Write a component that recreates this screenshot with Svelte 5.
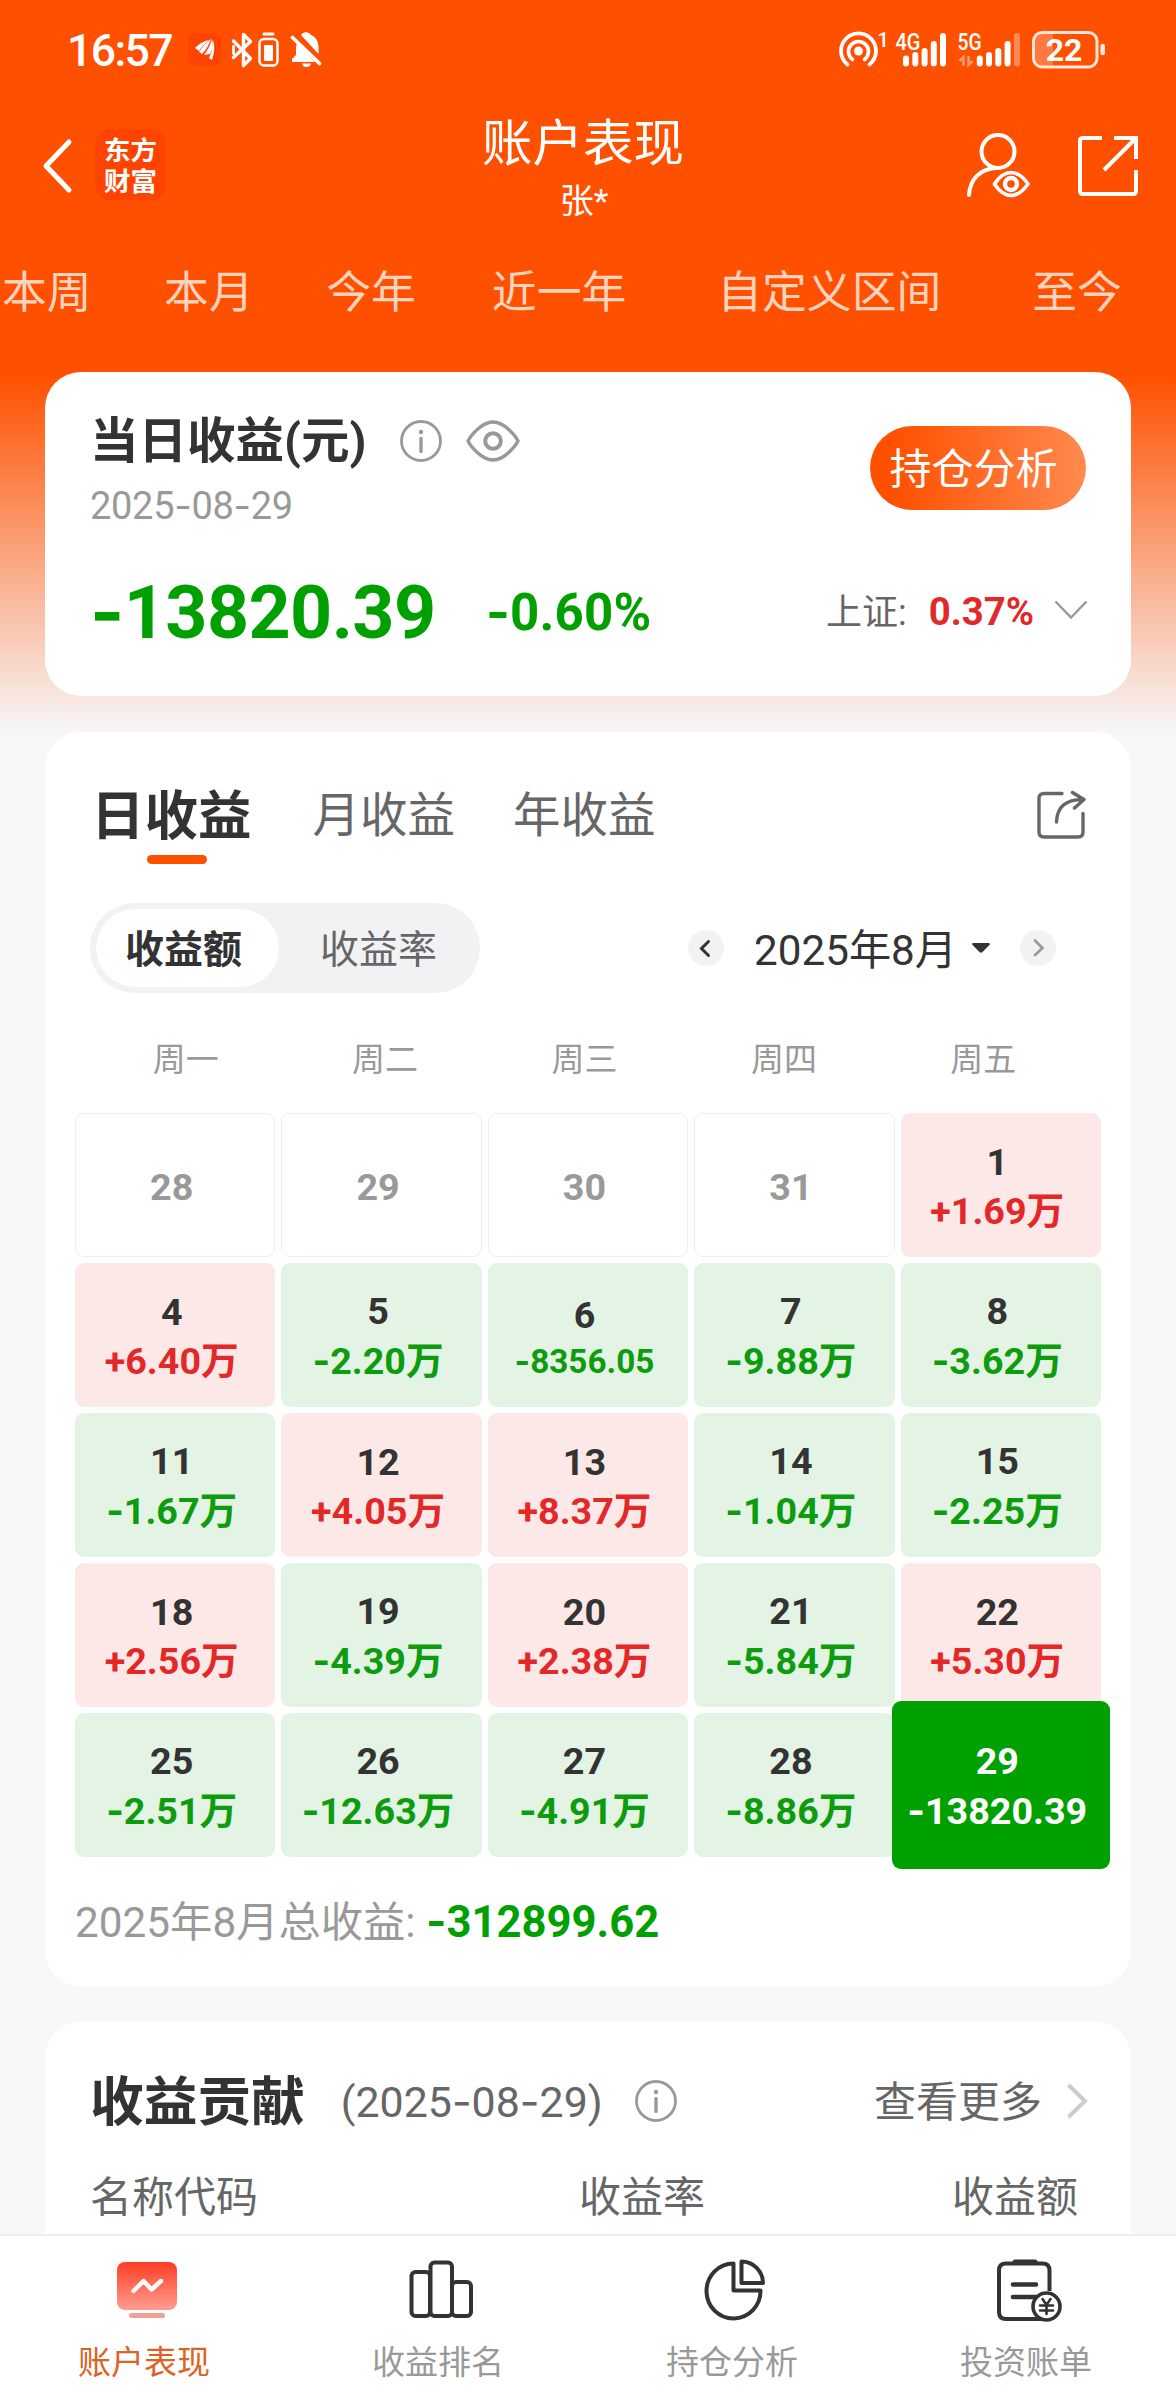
<script lang="ts">
	type Day = { day: number; value?: string; selected?: boolean };

	const ranges = ['本周', '本月', '今年', '近一年', '自定义区间', '至今'];
	const weekdays = ['周一', '周二', '周三', '周四', '周五'];

	const days: Day[] = [
		{ day: 28 },
		{ day: 29 },
		{ day: 30 },
		{ day: 31 },
		{ day: 1, value: '+1.69万' },
		{ day: 4, value: '+6.40万' },
		{ day: 5, value: '-2.20万' },
		{ day: 6, value: '-8356.05' },
		{ day: 7, value: '-9.88万' },
		{ day: 8, value: '-3.62万' },
		{ day: 11, value: '-1.67万' },
		{ day: 12, value: '+4.05万' },
		{ day: 13, value: '+8.37万' },
		{ day: 14, value: '-1.04万' },
		{ day: 15, value: '-2.25万' },
		{ day: 18, value: '+2.56万' },
		{ day: 19, value: '-4.39万' },
		{ day: 20, value: '+2.38万' },
		{ day: 21, value: '-5.84万' },
		{ day: 22, value: '+5.30万' },
		{ day: 25, value: '-2.51万' },
		{ day: 26, value: '-12.63万' },
		{ day: 27, value: '-4.91万' },
		{ day: 28, value: '-8.86万' },
		{ day: 29, value: '-13820.39', selected: true }
	];

	let mode = $state('amount');

	function isCompact(d: Day) {
		return !d.selected && !!d.value && !d.value.endsWith('万');
	}
</script>

<!-- the dash gets a wider glyph than the digits' own font has -->
{#snippet figure(text: string)}{#each text.split(/(-)/) as part}{#if part === '-'}<span class="dash">-</span>{:else}{part}{/if}{/each}{/snippet}

{#snippet infoIcon()}
	<svg class="info" width="42" height="42" viewBox="0 0 42 42" fill="none" stroke="#999">
		<circle cx="21" cy="21" r="19.5" stroke-width="2.8" />
		<path d="M21 18.5v13" stroke-width="3.4" stroke-linecap="round" />
		<circle cx="21" cy="12" r="2.2" fill="#999" stroke="none" />
	</svg>
{/snippet}

<div class="page">
	<div class="content">
		<div class="status">
			<span class="time">16:57</span>
			<svg class="status-left" width="136" height="40" viewBox="186 30 136 40" fill="none" stroke="#fff">
				<rect x="188" y="33" width="33" height="33" rx="8" fill="#ff4300" stroke="none" />
				<path d="M195 48q7-7 14-8-7 6-10 11zM199 52q6-9 12-13-3 9-9 15zM204 55q6-8 8-16 2 8-2 15zM209 58q4-8 4-18 3 8-1 20z" fill="#fff" stroke="none" />
				<path d="M233.5 41l17 17.5-7 7V34.5l7 7-17 16" stroke-width="3.4" stroke-linejoin="round" stroke-linecap="round" />
				<path d="M233.5 46.5v7" stroke-width="2.8" stroke-linecap="round" />
				<path d="M264 34h9" stroke-width="3" stroke-linecap="round" />
				<rect x="259.5" y="39" width="18" height="26.5" rx="4.5" stroke-width="2.4" />
				<rect x="264" y="45" width="9" height="16" rx="1" fill="#fff" stroke="none" />
				<path d="M301 35a6 6 0 0 1 10 0q7 3 7.5 11v8zM297 43l18 19h-23v-3l4-4v-8z" fill="#fff" stroke="none" />
				<path d="M302 63.5h9q-1 3.5-4.5 3.5t-4.5-3.5z" fill="#fff" stroke="none" />
				<path d="M292.5 37.5l27 26" stroke-width="3.6" stroke-linecap="round" />
			</svg>
			<svg class="status-right" width="272" height="44" viewBox="836 28 272 44" fill="none" stroke="#fff">
				<circle cx="858.5" cy="51" r="4.5" fill="#fff" stroke="none" />
				<path d="M852.5 59.5a10 10 0 1 1 12 0" stroke-width="3.6" stroke-linecap="round" />
				<path d="M847.5 64.5a17.5 17.5 0 1 1 22 0" stroke-width="3.8" stroke-linecap="round" />
				<text class="sup" x="877.5" y="47">1</text>
				<text class="net" x="895.5" y="50" textLength="25" lengthAdjust="spacingAndGlyphs">4G</text>
				<path d="M906 58.5v5M915.3 55v8.5M924.6 51v12.5M933.8 44v19.5M943 36v27.5" stroke-width="6" stroke-linecap="round" />
				<text class="net" x="957.5" y="50" textLength="24" lengthAdjust="spacingAndGlyphs">5G</text>
				<path d="M963.5 66V57l-4 4M968.5 56v9l4-4" stroke="#ff9b70" stroke-width="2.5" />
				<path d="M979.8 58.5v5M989 55v8.5M998.3 51v12.5M1007.6 44v19.5" stroke-width="6" stroke-linecap="round" />
				<path d="M1017 36v27.5" stroke="#ff8a57" stroke-width="6" stroke-linecap="round" />
				<path d="M1053 33v33h-12q-7 0-7-7V40q0-7 7-7z" fill="#ff7a40" stroke="none" />
				<rect x="1033.5" y="32.5" width="63.5" height="34.5" rx="8.5" stroke="#ffe6d8" stroke-width="3" />
				<path d="M1102.7 46v7" stroke="#ffe6d8" stroke-width="4.6" stroke-linecap="round" />
				<text class="charge" x="1064" y="61" text-anchor="middle">22</text>
			</svg>
		</div>

		<header>
			<svg class="back" width="32" height="56" viewBox="0 0 32 56" fill="none" stroke="#fff" stroke-width="5">
				<path d="M27 4L4 28l23 24" stroke-linecap="round" stroke-linejoin="round" />
			</svg>
			<div class="logo"><span>东方</span><span>财富</span></div>
			<div class="heading">
				<h1>账户表现</h1>
				<p>张*</p>
			</div>
			<svg class="viewer" width="66" height="66" viewBox="0 0 66 66" fill="none" stroke="#fff" stroke-width="4">
				<ellipse cx="32" cy="18.5" rx="16.5" ry="16.5" />
				<path d="M3 62C4 46 14 36 30 35" stroke-linecap="round" />
				<path d="M28.5 51Q36 39.5 45 39.5t17 11.5Q54 62.5 45 62.5T28.5 51z" stroke-width="3.6" stroke-linejoin="round" />
				<circle cx="45" cy="51" r="6" stroke-width="4.4" />
			</svg>
			<svg class="export" width="60" height="60" viewBox="0 0 60 60" fill="none" stroke="#fff" stroke-width="4">
				<path d="M24 2H5q-3 0-3 3v50q0 3 3 3h50q3 0 3-3V34" />
				<path d="M36 2h22v21M57 3L26 34" />
			</svg>
		</header>

		<nav class="ranges">
			{#each ranges as range}
				<span>{range}</span>
			{/each}
		</nav>

		<section class="card summary">
			<div class="summary-top">
				<div>
					<div class="title-row">
						<h2>当日收益(元)</h2>
						{@render infoIcon()}
						<svg width="54" height="42" viewBox="0 0 54 42" fill="none" stroke="#999">
							<path d="M2 21C4 17 15 2 27 2s23 15 25 19C50 25 39 40 27 40S4 25 2 21z" stroke-width="3.4" />
							<circle cx="27" cy="21" r="7.8" stroke-width="4" />
						</svg>
					</div>
					<p class="date">{@render figure('2025-08-29')}</p>
				</div>
				<button class="analyse">持仓分析</button>
			</div>
			<div class="summary-figures">
				<strong class="amount">{@render figure('-13820.39')}</strong>
				<strong class="rate">{@render figure('-0.60%')}</strong>
				<span class="index">上证:</span>
				<strong class="index-rate">0.37%</strong>
				<svg width="34" height="20" viewBox="0 0 34 20" fill="none" stroke="#999" stroke-width="2.4">
					<path d="M1.5 1.5L17 17.5 32.5 1.5" />
				</svg>
			</div>
		</section>

		<section class="card calendar">
			<div class="periods">
				<h2 class="active">日收益</h2>
				<span>月收益</span>
				<span>年收益</span>
				<svg width="50" height="50" viewBox="0 0 50 50" fill="none" stroke="#666" stroke-width="3.4">
					<path d="M26 3.5H8q-5 0-5 5V42q0 5 5 5h34q5 0 5-5V23.5" stroke-linecap="round" />
					<path d="M20.5 32C21 17 29 9.5 47 9.5M36.5 2.5L48 9.5 38.5 18" stroke-linecap="round" stroke-linejoin="round" />
				</svg>
			</div>

			<div class="controls">
				<div class="segmented">
					<button class:on={mode === 'amount'} onclick={() => (mode = 'amount')}>收益额</button>
					<button class:on={mode === 'rate'} onclick={() => (mode = 'rate')}>收益率</button>
				</div>
				<div class="month">
					<svg width="36" height="36" viewBox="0 0 36 36" fill="none" stroke="#333">
						<circle cx="18" cy="18" r="18" fill="#f2f2f5" stroke="none" />
						<path d="M20.5 11.5L13.5 18.5l7 7" stroke-width="3" stroke-linecap="round" />
					</svg>
					<span class="month-name">2025年8月</span>
					<svg class="caret" width="18" height="10" viewBox="0 0 18 10" fill="#333">
						<path d="M1 0h16q1.5.5.5 2L10.5 9q-1.5 1.4-3 0L.5 2Q-.5.5 1 0z" />
					</svg>
					<svg width="36" height="36" viewBox="0 0 36 36" fill="none" stroke="#999">
						<circle cx="18" cy="18" r="18" fill="#f2f2f5" stroke="none" />
						<path d="M15 10.5l7.5 7.5-7.5 7" stroke-width="2.6" stroke-linecap="round" />
					</svg>
				</div>
			</div>

			<div class="weekdays">
				{#each weekdays as weekday}
					<span>{weekday}</span>
				{/each}
			</div>

			<div class="days">
				{#each days as d}
					<div
						class="day"
						class:gain={d.value?.startsWith('+')}
						class:loss={d.value?.startsWith('-')}
						class:selected={d.selected}
						class:compact={isCompact(d)}
					>
						<span class="number">{d.day}</span>
						{#if d.value}
							<span class="value">{@render figure(d.value)}</span>
						{/if}
					</div>
				{/each}
			</div>

			<p class="total">2025年8月总收益: <strong>{@render figure('-312899.62')}</strong></p>
		</section>

		<section class="card contribution">
			<div class="contribution-head">
				<h2>收益贡献</h2>
				<span class="on-date">({@render figure('2025-08-29')})</span>
				{@render infoIcon()}
				<span class="more">查看更多</span>
				<svg width="22" height="36" viewBox="0 0 22 36" fill="none" stroke="#ccc" stroke-width="4">
					<path d="M2.5 2L19 18 2.5 34" />
				</svg>
			</div>
			<div class="columns">
				<span>名称代码</span>
				<span>收益率</span>
				<span>收益额</span>
			</div>
		</section>
	</div>

	<nav class="tabbar">
		<div class="tab current">
			<svg width="66" height="66" viewBox="0 0 66 66" fill="none">
				<defs>
					<linearGradient id="screen" x1="0" y1="0" x2="0" y2="1">
						<stop offset="0" stop-color="#ff3d24" />
						<stop offset="1" stop-color="#ff9d90" />
					</linearGradient>
				</defs>
				<rect x="3" y="4" width="60" height="48" rx="8" fill="url(#screen)" />
				<path d="M19.5 33l10-10 8 8.5 9.5-8.5" stroke="#fff" stroke-width="4.4" stroke-linecap="round" stroke-linejoin="round" />
				<rect x="15" y="55" width="36" height="5" rx="2.5" fill="#f2a096" />
			</svg>
			<span>账户表现</span>
		</div>
		<div class="tab">
			<svg width="66" height="66" viewBox="0 0 66 66" fill="none" stroke="#333" stroke-width="4">
				<rect x="3.5" y="14" width="18.5" height="44" rx="4" />
				<rect x="22.5" y="4.5" width="21.5" height="53.5" rx="4" />
				<rect x="44" y="24" width="19" height="34" rx="4" />
			</svg>
			<span>收益排名</span>
		</div>
		<div class="tab">
			<svg width="66" height="66" viewBox="0 0 66 66" fill="none" stroke="#333" stroke-width="4" stroke-linejoin="round">
				<path d="M31.5 5.5A27 27.5 0 1 0 58.5 32.5H31.5z" />
				<path d="M39.5 3.5v21.5H61A21.5 21.5 0 0 0 39.5 3.5z" />
			</svg>
			<span>持仓分析</span>
		</div>
		<div class="tab">
			<svg width="66" height="66" viewBox="0 0 66 66" fill="none" stroke="#333" stroke-width="4">
				<path d="M53.5 33V12.5q0-7-7-7H10q-7 0-7 7V54q0 7 7 7h38" />
				<path d="M19 4h20" stroke-width="5" stroke-linecap="round" />
				<path d="M17 26.5h23M17 39h23" stroke-width="4.6" stroke-linecap="round" />
				<circle cx="50.5" cy="48.5" r="13.5" fill="#fff" stroke-width="3.6" />
				<path d="M46.5 41l4 6 4-6M44 47.5h13M44 52.5h13M50.5 47v9" stroke-width="2.6" stroke-linecap="round" />
			</svg>
			<span>投资账单</span>
		</div>
	</nav>
</div>

<style>
	:global(body) {
		margin: 0;
		background: #f7f8fa;
	}

	.page {
		width: 1176px;
		height: 2400px;
		display: flex;
		flex-direction: column;
		overflow: hidden;
		font-family: Roboto, 'Noto Sans CJK SC', sans-serif;
		color: #333;
		background: linear-gradient(#ff5000 375px, #f7f8fa 735px);
	}

	h1,
	h2,
	p {
		margin: 0;
		font-weight: 400;
	}

	button {
		border: none;
		padding: 0;
		font-family: inherit;
	}

	svg {
		display: block;
		flex: none;
	}

	.dash {
		font-family: Inter, sans-serif;
	}

	.content {
		flex: 1;
		min-height: 0;
		overflow: hidden;
	}

	.status {
		display: flex;
		align-items: center;
		height: 100px;
		padding: 0 68px 0 67px;
		color: #fff;
	}

	.time {
		width: 119px;
		padding-top: 2px;
		font-size: 44.5px;
		font-weight: 500;
		line-height: 60px;
		letter-spacing: -1.6px;
	}

	.status-right {
		margin-left: auto;
	}

	.status text {
		fill: #fff;
		stroke: none;
		font-weight: 500;
	}

	.sup {
		font-size: 20px;
	}

	.net {
		font-size: 23px;
	}

	.status .charge {
		font-size: 32px;
		font-weight: 700;
	}

	header {
		display: flex;
		align-items: center;
		height: 132px;
		padding: 0 38px 0 42px;
		color: #fff;
	}

	.logo {
		display: flex;
		flex-direction: column;
		justify-content: center;
		box-sizing: border-box;
		width: 71px;
		height: 71px;
		margin: -3px 0 0 21px;
		padding-top: 3px;
		border-radius: 15px;
		background: #ff4300;
		text-align: center;
		font-size: 26.5px;
		font-weight: 700;
		line-height: 31px;
	}

	.heading {
		flex: 1;
		margin: 10px 0 0 34px;
		text-align: center;
	}

	h1 {
		font-size: 50.5px;
		line-height: 60px;
	}

	.heading p {
		padding-left: 2px;
		font-size: 34px;
		line-height: 54px;
	}

	.export {
		margin-left: 46px;
	}

	.ranges {
		display: flex;
		height: 140px;
		padding-left: 2px;
		color: #ffd3bd;
		font-size: 44.8px;
		line-height: 122px;
		white-space: nowrap;
	}

	.ranges span + span {
		margin-left: 72.5px;
	}

	.ranges span:nth-child(4) {
		margin-left: 76px;
	}

	.ranges span:nth-child(5) {
		margin-left: 91px;
	}

	.ranges span:nth-child(6) {
		margin-left: 91px;
	}

	.card {
		box-sizing: border-box;
		width: 1086px;
		margin: 0 auto 36px;
		border-radius: 36px;
		background: #fff;
	}

	.summary {
		height: 324px;
		padding: 38px 45px 0;
	}

	.summary-top {
		display: flex;
		justify-content: space-between;
	}

	.title-row {
		display: flex;
		align-items: center;
		height: 62px;
	}

	.title-row h2 {
		width: 310px;
		padding-top: 2px;
		font-size: 48.5px;
		font-weight: 700;
		line-height: 62px;
		white-space: nowrap;
	}

	.title-row .info {
		margin-right: 24px;
	}

	.date {
		color: #999;
		font-size: 38px;
		line-height: 66px;
		letter-spacing: -0.3px;
	}

	.analyse {
		width: 216px;
		height: 84px;
		margin-top: 16px;
		padding: 3px 9px 0 0;
		border-radius: 42px;
		background: linear-gradient(90deg, #ff5000 10%, #ff8a4f);
		color: #fff;
		font-size: 42px;
		line-height: 81px;
	}

	.summary-figures {
		display: flex;
		align-items: center;
		height: 100px;
		margin-top: 22px;
	}

	.amount,
	.rate {
		color: #00a000;
		white-space: nowrap;
	}

	.amount {
		width: 396px;
		font-size: 73.5px;
		letter-spacing: -0.6px;
	}

	.rate {
		font-size: 51px;
		letter-spacing: 0.2px;
	}

	.index {
		margin-left: auto;
		padding-bottom: 4px;
		color: #666;
		font-size: 36px;
	}

	.index-rate {
		margin: 0 20px 0 22px;
		color: #e02a2a;
		font-size: 38.3px;
	}

	.summary-figures svg {
		margin: -2px -2px 0 0;
	}

	.calendar {
		height: 1254px;
		padding: 45px 45px 0;
	}

	.periods {
		display: flex;
		align-items: center;
		height: 76px;
		color: #666;
		font-size: 47.5px;
		line-height: 76px;
	}

	.periods span {
		margin-left: 58px;
		padding-top: 2px;
	}

	.periods svg {
		margin-left: auto;
	}

	.periods .active {
		position: relative;
		padding: 4px 3px 0 1px;
		color: #333;
		font-size: 53.5px;
		font-weight: 700;
	}

	.periods .active::after {
		content: '';
		position: absolute;
		left: 57px;
		bottom: -9px;
		width: 60px;
		height: 9px;
		border-radius: 5px;
		background: #ff5000;
	}

	.controls {
		display: flex;
		justify-content: space-between;
		align-items: center;
		height: 90px;
		margin-top: 50px;
	}

	.segmented {
		display: flex;
		box-sizing: border-box;
		width: 390px;
		height: 90px;
		padding: 6px;
		border-radius: 45px;
		background: #f2f2f5;
	}

	.segmented button {
		width: 183px;
		height: 78px;
		padding: 4px 8px 0 0;
		border-radius: 39px;
		background: none;
		color: #666;
		font-size: 39px;
		line-height: 74px;
	}

	.segmented button:last-child {
		width: 195px;
		padding: 4px 0 0 4px;
	}

	.segmented .on {
		background: #fff;
		color: #333;
		font-weight: 700;
	}

	.month {
		display: flex;
		align-items: center;
		margin-right: 30px;
		font-size: 42.2px;
	}

	.month-name {
		margin-left: 30px;
		padding-top: 5px;
		line-height: 60px;
	}

	.caret {
		margin: 0 30px 0 15px;
	}

	.weekdays {
		display: flex;
		width: 997px;
		margin: 34px 0 0 -4px;
		color: #999;
		font-size: 33px;
		line-height: 66px;
		text-align: center;
	}

	.weekdays span {
		flex: 1;
	}

	.days {
		display: grid;
		grid-template-columns: repeat(5, 1fr);
		grid-auto-rows: 144px;
		gap: 6px;
		margin: 20px -15px 0;
	}

	.day {
		display: flex;
		flex-direction: column;
		align-items: center;
		justify-content: center;
		box-sizing: border-box;
		padding: 4px 7px 0 0;
		border: 1px solid #eee;
		border-radius: 9px;
		color: #999;
		font-size: 37.7px;
		font-weight: 700;
		line-height: 49px;
		white-space: nowrap;
	}

	.gain,
	.loss {
		padding-top: 3px;
		border: none;
	}

	.gain {
		background: #fde8e8;
	}

	.loss {
		background: #e3f4e4;
	}

	.gain .number,
	.loss .number {
		color: #333;
	}

	.gain .value {
		color: #e32828;
	}

	.loss .value {
		color: #0d9c0d;
	}

	.compact .value {
		font-size: 33.3px;
		line-height: 43px;
	}

	.selected {
		position: relative;
		margin: -12px -9px;
		background: #00a000;
	}

	.selected .number,
	.selected .value {
		color: #fff;
	}

	.total {
		margin: 35px 0 0 -15px;
		color: #999;
		font-size: 42.3px;
		line-height: 60px;
	}

	.total strong {
		color: #00a000;
		font-size: 43.6px;
	}

	.contribution {
		height: 324px;
		margin-bottom: 0;
		padding: 44px 45px 0;
	}

	.contribution-head {
		display: flex;
		align-items: center;
		height: 70px;
		color: #666;
		font-size: 42px;
		line-height: 70px;
	}

	.contribution-head h2 {
		padding-top: 4px;
		color: #333;
		font-size: 53.7px;
		font-weight: 700;
	}

	.on-date {
		width: 294px;
		margin-left: 36px;
		white-space: nowrap;
		font-size: 42.9px;
	}

	.more {
		margin: 0 24px 0 auto;
		padding-top: 3px;
	}

	.contribution-head svg:last-child {
		margin-right: -2px;
	}

	.columns {
		display: flex;
		margin-top: 29px;
		padding-right: 8px;
		color: #666;
		font-size: 42px;
		line-height: 66px;
	}

	.columns span {
		flex: 1;
	}

	.columns span:nth-child(2) {
		flex: none;
		width: 284px;
		text-align: right;
	}

	.columns span:last-child {
		flex: none;
		width: 373px;
		text-align: right;
	}

	.tabbar {
		display: flex;
		box-sizing: border-box;
		height: 166px;
		padding-top: 22px;
		border-top: 2px solid #eee;
		background: #fff;
	}

	.tab {
		display: flex;
		flex: 1;
		flex-direction: column;
		align-items: center;
		color: #999;
		font-size: 33px;
		line-height: 50px;
	}

	.tab span {
		margin: 14px 6px 0 0;
	}

	.tab.current {
		color: #dc6323;
	}
</style>
